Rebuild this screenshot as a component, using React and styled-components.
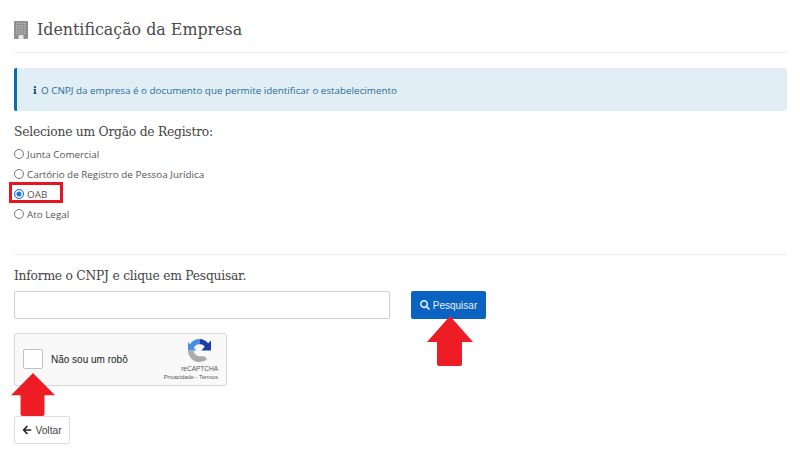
import React from 'react';
import styled, {createGlobalStyle} from 'styled-components';
import {FaSearch, FaArrowLeft, FaInfo} from 'react-icons/fa';

const Global = createGlobalStyle`
  html, body {
    margin: 0;
    background: #fff;
    font-family: "Open Sans", sans-serif;
    overflow: hidden;
  }
`;

const registros = [
  {id: 'junta', label: 'Junta Comercial'},
  {id: 'cartorio', label: 'Cartório de Registro de Pessoa Jurídica'},
  {id: 'oab', label: 'OAB', checked: true},
  {id: 'ato', label: 'Ato Legal'},
];

const BuildingIcon = () => (
  <svg width="14" height="18" viewBox="0 0 14 18">
    <rect width="14" height="18" rx="1" fill="#8e8e8e"/>
    {[1.5, 4, 6.5, 9, 11.5].map((y) => [2, 4.6, 7.2, 9.8].map((x) => (
      <rect key={`${x}-${y}`} x={x} y={y} width="1.7" height="1.5" fill="#b4b4b4"/>
    )))}
    <rect x="4.5" y="14" width="5" height="4" fill="#e8e8e8"/>
  </svg>
);

const RecaptchaLogo = () => (
  <svg width="23" height="23" viewBox="0 0 24 24">
    <path d="M12 0A12 12 0 0 0 2 5.5L0 3V12H9L6 9.5A6.5 6.5 0 0 1 12 5.5Z" fill="#4a90e2"/>
    <path d="M12 0A12 12 0 0 1 21 4.5L24 1.5V12H14L17.5 8A6 6 0 0 0 12 5.5Z" fill="#1c3aa9"/>
    <path d="M0 12H6A6 6 0 0 0 12 18H17L20 21A12 12 0 0 1 12 24A12 12 0 0 1 0 12Z" fill="#ababab"/>
  </svg>
);

const Arrow = ({width, height}) => (
  <svg width={width} height={height} viewBox="0 0 46 50" preserveAspectRatio="none">
    <path d="M23 0 L46 26 H35 V48 Q35 50 33 50 H12 Q10 50 10 48 V26 H0 Z" fill="#ee1c25"/>
  </svg>
);

export default function App() {
  return (
    <Page>
      <Global/>
      <Header>
        <BuildingIcon/>
        <Title>Identificação da Empresa</Title>
      </Header>
      <Alert>
        <FaInfo size={8} color="#1c5a7d"/>
        <span>O CNPJ da empresa é o documento que permite identificar o estabelecimento</span>
      </Alert>
      <SectionLabel>Selecione um Orgão de Registro:</SectionLabel>
      <RadioList>
        {registros.map((r) => (
          <RadioRow key={r.id}>
            <Radio $checked={r.checked}/>
            {r.label}
            {r.checked && <Highlight/>}
          </RadioRow>
        ))}
      </RadioList>
      <Divider/>
      <SectionLabel>Informe o CNPJ e clique em Pesquisar.</SectionLabel>
      <SearchRow>
        <Input/>
        <SearchButton>
          <FaSearch size={10}/>
          Pesquisar
          <ArrowPin $top={25} $left={16}><Arrow width={46} height={50}/></ArrowPin>
        </SearchButton>
      </SearchRow>
      <Captcha>
        <CheckBox/>
        <CaptchaText>Não sou um robô</CaptchaText>
        <CaptchaBrand>
          <LogoWrap><RecaptchaLogo/></LogoWrap>
          <BrandName>reCAPTCHA</BrandName>
          <BrandLinks>Privacidade - Termos</BrandLinks>
        </CaptchaBrand>
        <ArrowPin $top={39} $left={-4}><Arrow width={44} height={43}/></ArrowPin>
      </Captcha>
      <BackButton>
        <FaArrowLeft size={10} color="#222"/>
        Voltar
      </BackButton>
    </Page>
  );
}

const Page = styled.div`
  width: 800px;
  height: 457px;
  box-sizing: border-box;
  padding: 0 13px 0 14px;
  color: #444;
`;

const Header = styled.div`
  height: 53px;
  box-sizing: border-box;
  padding-top: 21px;
  display: flex;
  align-items: flex-start;
  gap: 9px;
  border-bottom: 1px solid #eee;
`;

const Title = styled.h1`
  margin: 0;
  font-family: "DejaVu Serif", serif;
  font-weight: 400;
  font-size: 15.85px;
  line-height: 18px;
  color: #4a4a4a;
`;

const Alert = styled.div`
  margin-top: 15px;
  height: 43px;
  box-sizing: border-box;
  padding-left: 14px;
  display: flex;
  align-items: center;
  gap: 2px;
  background: #e1eef5;
  border-left: 3px solid #0a6ea8;
  border-radius: 2px;
  font-size: 9.85px;
  color: #2a6d94;
`;

const SectionLabel = styled.div`
  margin-top: 13px;
  font-family: "DejaVu Serif", serif;
  font-size: 12.3px;
  letter-spacing: -0.24px;
  line-height: 17px;
  color: #444;
`;

const RadioList = styled.div`
  margin-top: 3px;
  display: flex;
  flex-direction: column;
`;

const RadioRow = styled.div`
  position: relative;
  height: 20px;
  display: flex;
  align-items: center;
  gap: 3px;
  font-size: 9.85px;
  color: #555;
`;

const Radio = styled.span`
  width: 10px;
  height: 10px;
  box-sizing: border-box;
  border-radius: 50%;
  background: ${(p) => (p.$checked ? '#1a73e8' : '#fff')};
  border: ${(p) => (p.$checked ? '1.5px solid #1a73e8' : '1.3px solid #767676')};
  box-shadow: ${(p) => (p.$checked ? 'inset 0 0 0 1.5px #fff' : 'none')};
`;

const Highlight = styled.span`
  position: absolute;
  left: -5px;
  top: -2px;
  width: 54px;
  height: 21px;
  box-sizing: border-box;
  border: 3px solid #e8141f;
`;

const Divider = styled.hr`
  margin: 30px 0 0;
  border: 0;
  border-top: 1px solid #eee;
`;

const SearchRow = styled.div`
  margin-top: 6px;
  display: flex;
  gap: 21px;
`;

const Input = styled.div`
  width: 376px;
  height: 28px;
  box-sizing: border-box;
  background: #fff;
  border: 1px solid #ccc;
  border-radius: 2px;
`;

const SearchButton = styled.div`
  position: relative;
  width: 75px;
  height: 28px;
  display: flex;
  align-items: center;
  justify-content: center;
  gap: 3px;
  background: #0a62c2;
  border-radius: 2px;
  color: #e8f0fa;
  font-family: "Liberation Sans", sans-serif;
  font-size: 10px;
`;

const ArrowPin = styled.div`
  position: absolute;
  top: ${(p) => p.$top}px;
  left: ${(p) => p.$left}px;
  line-height: 0;
`;

const Captcha = styled.div`
  position: relative;
  margin-top: 14px;
  width: 213px;
  height: 53px;
  box-sizing: border-box;
  padding: 0 8px;
  display: flex;
  align-items: center;
  background: #f9f9f9;
  border: 1px solid #d8d8d8;
  border-radius: 3px;
  box-shadow: 0 0 2px rgba(0, 0, 0, 0.08);
  font-family: "Liberation Sans", sans-serif;
`;

const CheckBox = styled.div`
  width: 20px;
  height: 20px;
  margin-bottom: 1px;
  box-sizing: border-box;
  background: #fff;
  border: 1.5px solid #c1c1c1;
  border-radius: 2px;
`;

const CaptchaText = styled.span`
  margin-left: 8px;
  font-size: 10px;
  color: #222;
`;

const CaptchaBrand = styled.div`
  margin-left: auto;
  display: flex;
  flex-direction: column;
  align-items: flex-end;
  color: #555;
`;

const LogoWrap = styled.div`
  margin-right: 7px;
  line-height: 0;
`;

const BrandName = styled.span`
  margin-top: 3px;
  font-size: 6.5px;
  line-height: 8px;
`;

const BrandLinks = styled.span`
  margin-top: 1px;
  font-size: 5.8px;
  line-height: 7px;
`;

const BackButton = styled.div`
  position: relative;
  margin-top: 30px;
  width: 56px;
  height: 28px;
  box-sizing: border-box;
  display: flex;
  align-items: center;
  justify-content: center;
  gap: 3px;
  background: #fff;
  border: 1px solid #ddd;
  border-radius: 2px;
  font-family: "Liberation Sans", sans-serif;
  font-size: 10.2px;
  color: #444;
`;
